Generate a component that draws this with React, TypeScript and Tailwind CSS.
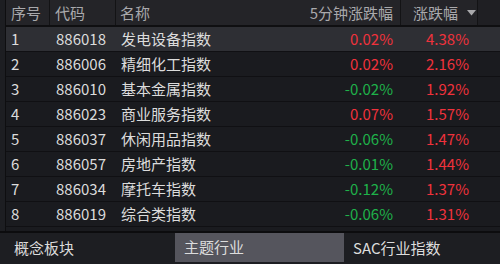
import React from "react";

const rows = [
  { no: 1, code: "886018", name: "发电设备指数", m5: "0.02%", chg: "4.38%" },
  { no: 2, code: "886006", name: "精细化工指数", m5: "0.02%", chg: "2.16%" },
  { no: 3, code: "886010", name: "基本金属指数", m5: "-0.02%", chg: "1.92%" },
  { no: 4, code: "886023", name: "商业服务指数", m5: "0.07%", chg: "1.57%" },
  { no: 5, code: "886037", name: "休闲用品指数", m5: "-0.06%", chg: "1.47%" },
  { no: 6, code: "886057", name: "房地产指数", m5: "-0.01%", chg: "1.44%" },
  { no: 7, code: "886034", name: "摩托车指数", m5: "-0.12%", chg: "1.37%" },
  { no: 8, code: "886019", name: "综合类指数", m5: "-0.06%", chg: "1.31%" },
];

const tabs = ["概念板块", "主题行业", "SAC行业指数"];

export default function App() {
  return (
    <div
      className="w-[500px] h-[264px] bg-[#1a1b1f] text-[#dcdcdc] overflow-hidden flex flex-col"
      style={{ fontFamily: '"Noto Sans CJK SC", "Noto Sans", sans-serif' }}
    >
      <div className="flex h-[233px] border-b-2 border-[#0c0c0e]">
        {/* left gutter */}
        <div className="w-[6px] bg-[#1d1e22] border-r border-[#0e0e10]" />

        <div className="flex-1 flex flex-col">
          {/* header */}
          <div className="flex h-[27px] bg-[#242428] border-b-2 border-[#0f0f11] text-[15px] text-[#a9a9ac] leading-[25px]">
            <div className="w-[44px] pl-[5px] border-r border-[#131315]">序号</div>
            <div className="w-[66px] pl-[5px] border-r border-[#131315]">代码</div>
            <div className="w-[285px] pl-[4px] border-r border-[#131315] flex">
              <span>名称</span>
              <span className="ml-auto pr-[7px]">5分钟涨跌幅</span>
            </div>
            <div className="w-[77px] pl-[12px] border-r border-[#131315] flex items-center gap-[9px]">
              <span>涨跌幅</span>
              <svg width="9" height="6" viewBox="0 0 9 6">
                <path d="M0 0h9L4.5 5.5z" fill="#a9a9ac" />
              </svg>
            </div>
            <div className="flex-1 bg-[#1f1f23]" />
          </div>

          {/* rows */}
          {rows.map((r, i) => {
            const down = r.m5.startsWith("-");
            return (
              <div
                key={r.code}
                className={`flex h-[25px] items-center text-[15px] border-b border-[#101013] ${
                  i === 0 ? "bg-[#2e2f34]" : ""
                }`}
              >
                <div className="w-[44px] pl-[5px]">{r.no}</div>
                <div className="w-[66px] pl-[6px]">{r.code}</div>
                <div className="w-[285px] pl-[5px] flex">
                  <span>{r.name}</span>
                  <span className={`ml-auto pr-[8px] ${down ? "text-[#1fb14a]" : "text-[#f0323c]"}`}>
                    {r.m5}
                  </span>
                </div>
                <div className="w-[77px] pr-[9px] text-right text-[#f0323c]">{r.chg}</div>
                <div className="flex-1" />
              </div>
            );
          })}
        </div>
      </div>

      {/* bottom tabs */}
      <div className="flex-1 flex bg-[#1d1e22] text-[15px] items-stretch">
        <div className="w-[175px] pl-[14px] flex items-center">{tabs[0]}</div>
        <div className="w-[169px] pl-[9px] flex items-center bg-[#55555d] mb-[2px]">{tabs[1]}</div>
        <div className="flex-1 pl-[9px] flex items-center">{tabs[2]}</div>
      </div>
    </div>
  );
}
